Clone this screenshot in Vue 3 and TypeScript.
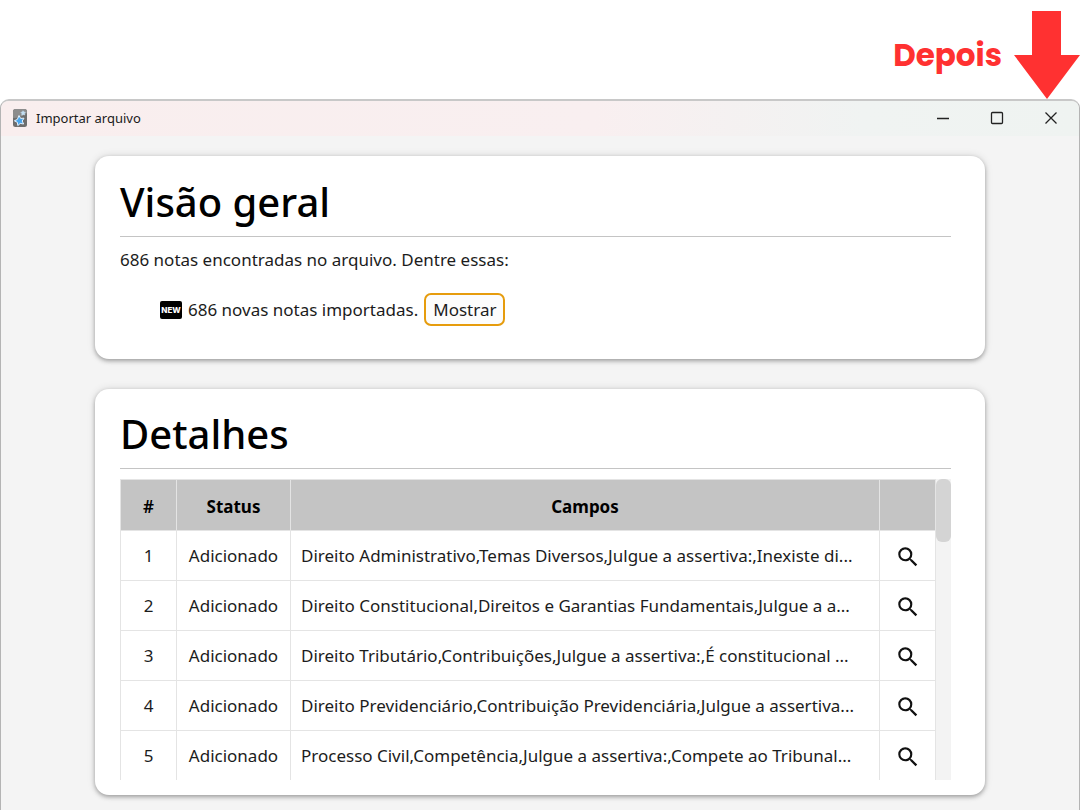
<script setup lang="ts">
interface Note {
  id: number
  status: string
  fields: string
}

const notes: Note[] = [
  { id: 1, status: 'Adicionado', fields: 'Direito Administrativo,Temas Diversos,Julgue a assertiva:,Inexiste di...' },
  { id: 2, status: 'Adicionado', fields: 'Direito Constitucional,Direitos e Garantias Fundamentais,Julgue a a...' },
  { id: 3, status: 'Adicionado', fields: 'Direito Tributário,Contribuições,Julgue a assertiva:,É constitucional ...' },
  { id: 4, status: 'Adicionado', fields: 'Direito Previdenciário,Contribuição Previdenciária,Julgue a assertiva...' },
  { id: 5, status: 'Adicionado', fields: 'Processo Civil,Competência,Julgue a assertiva:,Compete ao Tribunal...' },
]
</script>

<template>
  <div class="page">
    <header class="callout">
      <strong class="callout-label">Depois</strong>
      <svg class="arrow" viewBox="0 0 66 88" aria-hidden="true">
        <path d="M18 0H47V44H66L33 88L0 44H18Z" fill="#ff3131" />
      </svg>
    </header>

    <section class="window">
      <div class="titlebar">
        <svg class="app-icon" viewBox="0 0 16 20" aria-hidden="true">
          <rect x="1" y="1" width="14" height="18" rx="2.5" fill="#6e6e6e" />
          <path d="M1 3.5Q1 1 3.5 1H12.5Q15 1 15 3.5V5Q9 10 1 10Z" fill="#8c8c8c" />
          <path d="M7 7.5L8.6 10.4L12 10.2L10.2 13L11.6 16L8.2 15.4L5.8 17.6L5.4 14.4L2.4 12.8L5.4 11.4Z" fill="#4aa5ec" stroke="#e4f3ff" stroke-width="1" />
          <path d="M11 2.7L11.8 4L13.4 4.2L12.4 5.4L12.8 7L11.2 6.4L9.8 7.2L9.9 5.5L8.8 4.4L10.4 4Z" fill="#c3def2" stroke="#c3def2" stroke-width="0.6" />
        </svg>
        <span class="title">Importar arquivo</span>
        <div class="controls">
          <button type="button" aria-label="Minimizar">
            <svg viewBox="0 0 14 14"><path d="M1 7.5H13" /></svg>
          </button>
          <button type="button" aria-label="Maximizar">
            <svg viewBox="0 0 14 14"><rect x="1.5" y="1.5" width="11" height="11" rx="1" /></svg>
          </button>
          <button type="button" aria-label="Fechar">
            <svg viewBox="0 0 14 14"><path d="M1.5 1.5L12.5 12.5M12.5 1.5L1.5 12.5" /></svg>
          </button>
        </div>
      </div>

      <main class="content">
        <article class="card overview">
          <h1>Visão geral</h1>
          <p>686 notas encontradas no arquivo. Dentre essas:</p>
          <ul>
            <li>
              <span class="new">NEW</span>
              <span>686 novas notas importadas.</span>
              <button type="button" class="show">Mostrar</button>
            </li>
          </ul>
        </article>

        <article class="card">
          <h1>Detalhes</h1>
          <div class="scroller">
            <table>
              <colgroup>
                <col class="col-id" />
                <col class="col-status" />
                <col />
                <col class="col-id" />
              </colgroup>
              <thead>
                <tr>
                  <th class="number">#</th>
                  <th>Status</th>
                  <th>Campos</th>
                  <th></th>
                </tr>
              </thead>
              <tbody>
                <tr v-for="note in notes" :key="note.id">
                  <td class="center">{{ note.id }}</td>
                  <td class="center">{{ note.status }}</td>
                  <td class="fields">{{ note.fields }}</td>
                  <td class="center">
                    <button type="button" class="search" :aria-label="`Procurar nota ${note.id}`">
                      <svg viewBox="0 0 24 24">
                        <path d="M15.5 14h-.79l-.28-.27A6.47 6.47 0 0 0 16 9.5 6.5 6.5 0 1 0 9.5 16c1.61 0 3.09-.59 4.23-1.57l.27.28v.79l5 4.99L20.49 19l-4.99-5zm-6 0C7.01 14 5 11.99 5 9.5S7.01 5 9.5 5 14 7.01 14 9.5 11.99 14 9.5 14z" />
                      </svg>
                    </button>
                  </td>
                </tr>
              </tbody>
            </table>
            <div class="track"><div class="thumb"></div></div>
          </div>
        </article>
      </main>
    </section>
  </div>
</template>

<style>
body {
  margin: 0;
  background: #fff;
}
</style>

<style scoped>
.page {
  display: flex;
  flex-direction: column;
  min-height: 100vh;
  font-family: "Segoe UI", "Noto Sans", "Open Sans", sans-serif;
  font-size: 17px;
  line-height: 26px;
  color: #1c1c1c;
}
.page *,
.page {
  box-sizing: border-box;
}
button {
  font: inherit;
  color: inherit;
  background: none;
  border: 0;
  padding: 0;
}
.callout {
  display: flex;
  justify-content: flex-end;
  align-items: flex-start;
  gap: 12px;
  height: 99px;
  padding-top: 11px;
}
.callout-label {
  font-family: Poppins, Inter, sans-serif;
  font-size: 31px;
  font-weight: 700;
  line-height: 88px;
  color: #ff3131;
}
.arrow {
  width: 66px;
  height: 88px;
}
.window {
  flex: 1;
  border: 1px solid #b4b4b4;
  border-top: 2px solid #c8c8c8;
  border-bottom: 0;
  border-radius: 9px 9px 0 0;
  background: #f4f4f4;
  overflow: hidden;
}
.titlebar {
  display: flex;
  align-items: center;
  height: 35px;
  padding: 0 1px 2px 11px;
  background: linear-gradient(90deg, #f9eeee 0%, #f9eff0 55%, #f0f3f2 80%, #eff3f1 100%);
}
.app-icon {
  width: 16px;
  height: 20px;
}
.title {
  flex: 1;
  margin-left: 8px;
  font-size: 13px;
  line-height: 20px;
  color: #1a1a1a;
}
.controls {
  display: flex;
}
.controls button {
  display: grid;
  place-items: center;
  width: 54px;
  height: 33px;
}
.controls svg {
  width: 14px;
  height: 14px;
  fill: none;
  stroke: #222;
  stroke-width: 1.3;
}
.content {
  display: flex;
  flex-direction: column;
  gap: 30px;
  padding: 20px 94px 15px;
}
.card {
  padding: 20px 34px 15px 25px;
  background: #fff;
  border-radius: 14px;
  box-shadow: 0 2px 4px rgba(0, 0, 0, 0.3), 0 0 8px rgba(0, 0, 0, 0.12);
}
.overview {
  padding-top: 21px;
  padding-bottom: 33px;
}
h1 {
  margin: 0 0 10px;
  padding-bottom: 9px;
  border-bottom: 1px solid #c4c4c4;
  font-size: 40px;
  font-weight: 500;
  line-height: 50px;
  color: #000;
}
p {
  margin: 0;
}
ul {
  margin: 20px 0 0;
  padding: 0 0 0 40px;
  list-style: none;
}
li {
  display: flex;
  align-items: center;
  gap: 6px;
}
.new {
  width: 22px;
  border-radius: 2px;
  background: #000;
  color: #fff;
  font-family: Inter, sans-serif;
  font-size: 8px;
  font-weight: 800;
  line-height: 18px;
  text-align: center;
}
.show {
  padding: 1px 7px;
  border: 2px solid #e69c0d;
  border-radius: 7px;
  background: #fcfcfc;
  line-height: 27px;
}
.scroller {
  display: flex;
  height: 301px;
  overflow: hidden;
}
table {
  width: calc(100% - 15px);
  table-layout: fixed;
  border-collapse: collapse;
}
.col-id {
  width: 56px;
}
.col-status {
  width: 114px;
}
th,
td {
  height: 50px;
  padding: 0;
  border: 1px solid #e4e4e4;
}
th {
  height: 51px;
  padding-top: 4px;
  background: #c4c4c4;
  color: #000;
  font-weight: 700;
}
.number {
  font-weight: 600;
}
.center {
  text-align: center;
}
.fields {
  padding-left: 10px;
  overflow: hidden;
  white-space: nowrap;
}
.search {
  display: block;
  width: 26px;
  height: 28px;
  margin: 0 auto;
  padding-top: 2px;
}
.search svg {
  display: block;
  width: 26px;
  height: 26px;
  fill: #111;
}
.track {
  width: 15px;
  background: #f3f3f3;
}
.thumb {
  height: 63px;
  border-radius: 6px;
  background: #d4d4d4;
}
</style>
